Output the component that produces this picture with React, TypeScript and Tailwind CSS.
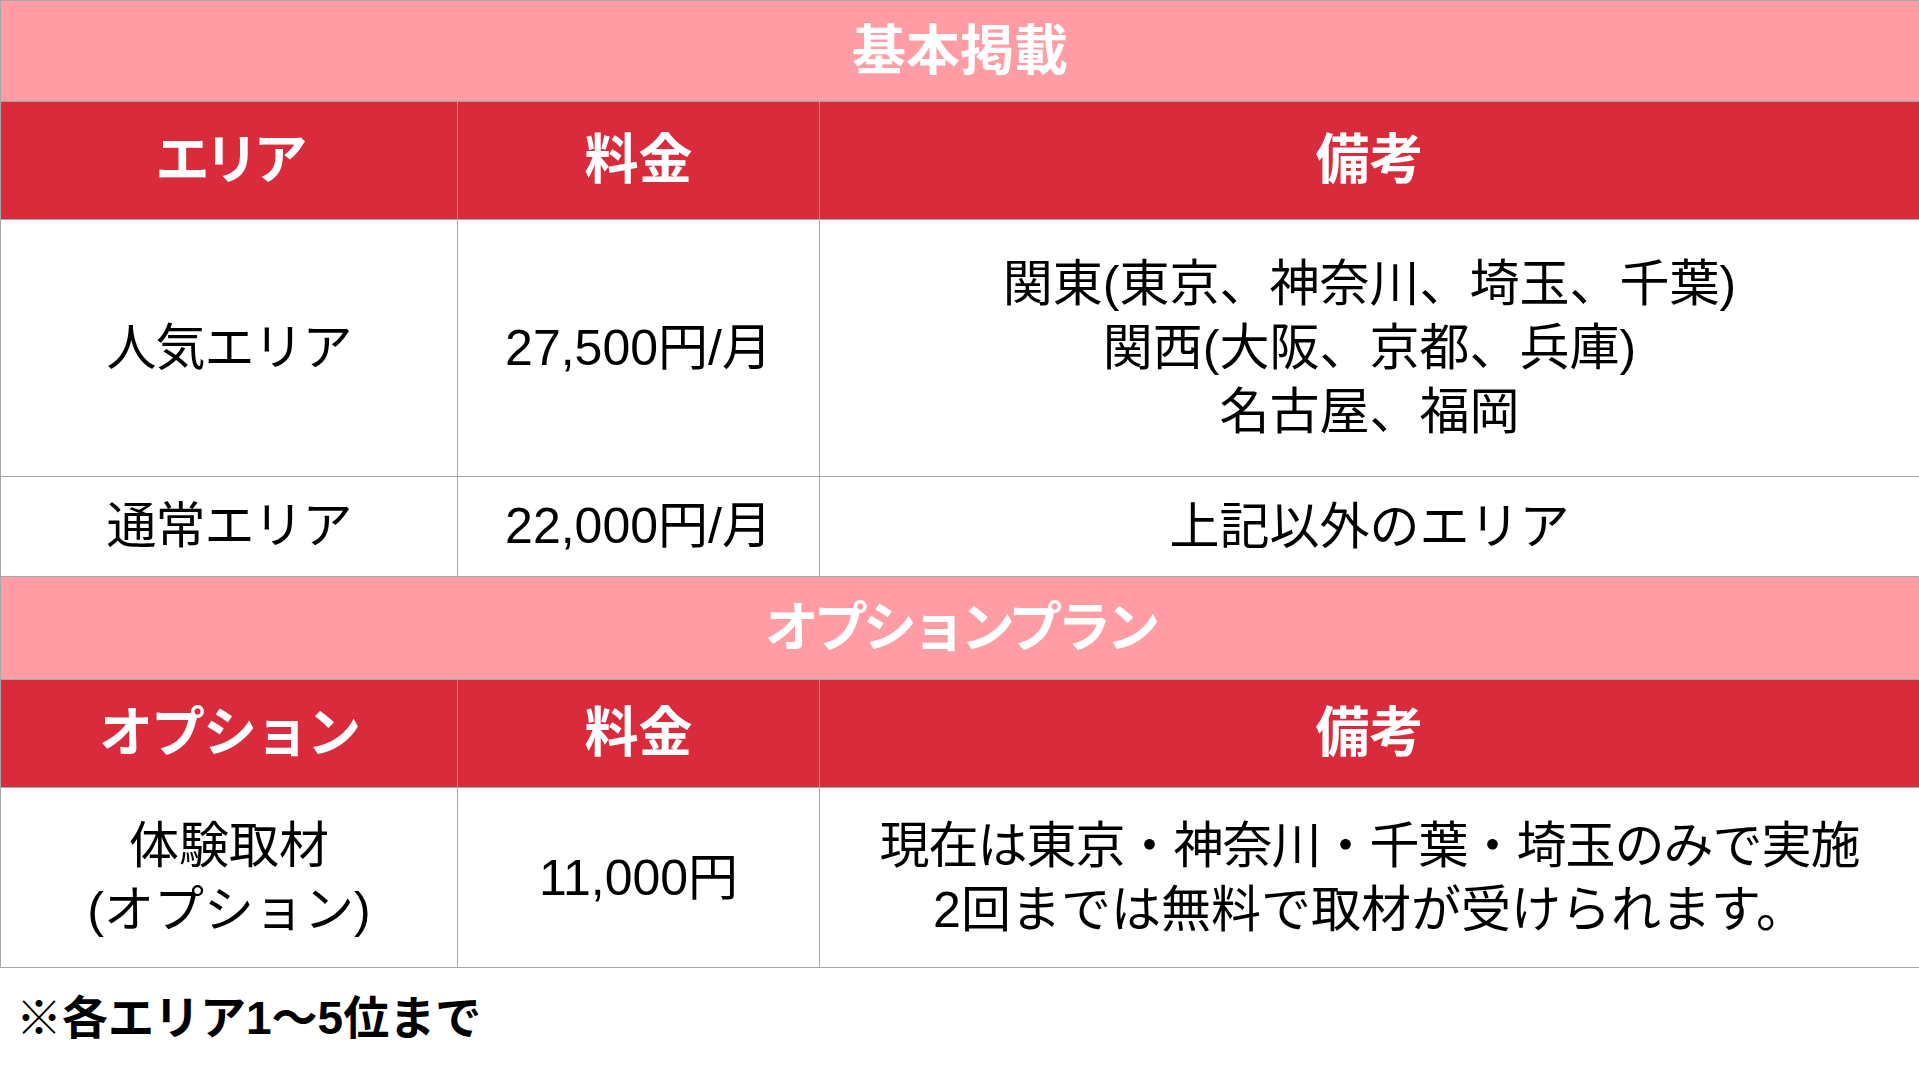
const FONT = "font-['Liberation_Sans','Noto_Sans_CJK_JP',sans-serif]"

const basicRows = [
  {
    area: '人気エリア',
    price: '27,500円/月',
    note: ['関東(東京、神奈川、埼玉、千葉)', '関西(大阪、京都、兵庫)', '名古屋、福岡'],
    h: 'h-[257px]',
  },
  { area: '通常エリア', price: '22,000円/月', note: ['上記以外のエリア'], h: 'h-[100px]' },
]

function TitleRow({ label, h, track }: { label: string; h: string; track: string }) {
  return (
    <tr className={h}>
      <td colSpan={3} className={`bg-[#ff9ca4] border border-[#a6a6a6] text-center text-[54px] font-bold text-white ${track}`}>
        {label}
      </td>
    </tr>
  )
}

function HeadRow({ first, h, track }: { first: string; h: string; track: string }) {
  return (
    <tr className={`${h} bg-[#d92b3b] text-white text-[54px] font-bold`}>
      <th className={`border border-[#a6a6a6] font-bold ${track}`}>{first}</th>
      <th className="border border-[#a6a6a6] font-bold">料金</th>
      <th className="border border-[#a6a6a6] font-bold">備考</th>
    </tr>
  )
}

export default function App() {
  return (
    <div className={`w-[1919px] h-[1080px] bg-white text-black ${FONT}`}>
      <table className="w-[1919px] table-fixed border-collapse">
        <colgroup>
          <col className="w-[457px]" />
          <col className="w-[362px]" />
          <col className="w-[1100px]" />
        </colgroup>
        <tbody>
          <TitleRow label="基本掲載" h="h-[101px]" track="" />
          <HeadRow first="エリア" h="h-[118px]" track="tracking-[-5px]" />
          {basicRows.map(r => (
            <tr key={r.area} className={`${r.h} text-[50px] text-center`}>
              <td className="border border-[#a6a6a6] tracking-[-1px]">{r.area}</td>
              <td className="border border-[#a6a6a6]">{r.price}</td>
              <td className="border border-[#a6a6a6] leading-[64px]">
                {r.note.map(line => (
                  <div key={line}>{line}</div>
                ))}
              </td>
            </tr>
          ))}
          <TitleRow label="オプションプラン" h="h-[103px]" track="tracking-[-5px]" />
          <HeadRow first="オプション" h="h-[108px]" track="tracking-[-2px]" />
          <tr className="h-[180px] text-[50px] text-center leading-[64px]">
            <td className="border border-[#a6a6a6]">
              <div>体験取材</div>
              <div>(オプション)</div>
            </td>
            <td className="border border-[#a6a6a6]">11,000円</td>
            <td className="border border-[#a6a6a6]">
              <div className="tracking-[-1px]">現在は東京・神奈川・千葉・埼玉のみで実施</div>
              <div>2回までは無料で取材が受けられます。</div>
            </td>
          </tr>
        </tbody>
      </table>
      <p className="pl-[16px] pt-[22px] text-[46px] font-bold leading-[56px]">※各エリア1〜5位まで</p>
    </div>
  )
}
